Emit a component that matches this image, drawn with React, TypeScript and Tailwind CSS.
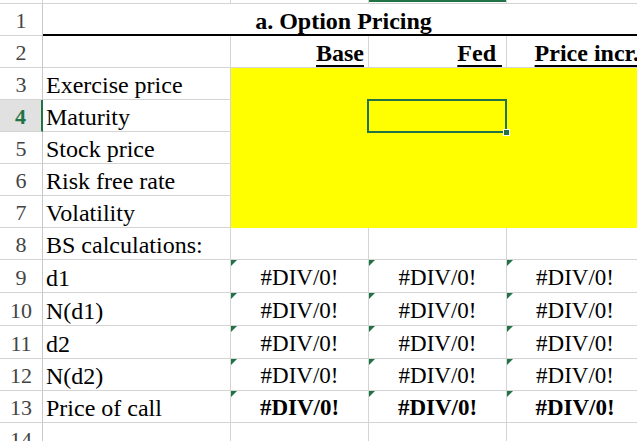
import React from "react";

const labels = [
  "",
  "",
  "Exercise price",
  "Maturity",
  "Stock price",
  "Risk free rate",
  "Volatility",
  "BS calculations:",
  "d1",
  "N(d1)",
  "d2",
  "N(d2)",
  "Price of call",
  "",
];

const heads = ["Base", "Fed ", "Price incr."];

function RowHead({ n }: { n: number }) {
  const sel = n === 4;
  return (
    <div
      className={`flex items-end justify-center border-b border-[#d4d4d4] pb-[1px] text-[22px] leading-[26px] ${
        sel ? "border-r-2 border-r-[#217346] bg-[#e1e1e1] font-bold text-[#217346]" : "border-r border-r-[#c8c8c8] text-[#444]"
      }`}
    >
      {n}
    </div>
  );
}

function ErrCell({ bold }: { bold: boolean }) {
  return (
    <div className="relative flex items-end justify-center border-b border-r border-[#d4d4d4] pb-[1px]">
      <span className="absolute left-0 top-0 h-0 w-0 border-r-[6px] border-t-[6px] border-r-transparent border-t-[#217346]" />
      <span className={bold ? "font-bold" : ""}>#DIV/0!</span>
    </div>
  );
}

export default function App() {
  const rows: React.ReactNode[] = [];

  for (let r = 1; r <= 14; r++) {
    rows.push(<RowHead key={`h${r}`} n={r} />);
    if (r === 1) {
      rows.push(
        <div key="title" className="col-span-4 flex items-end justify-center border-b-2 border-black text-[24px] font-bold">
          a. Option Pricing
        </div>
      );
      continue;
    }
    rows.push(
      <div key={`a${r}`} className="flex items-end border-b border-r border-[#d4d4d4] px-[3px] pb-[1px] text-[24px] whitespace-nowrap">
        {labels[r - 1]}
      </div>
    );
    for (let c = 0; c < 3; c++) {
      const k = `c${r}-${c}`;
      if (r === 2) {
        rows.push(
          <div key={k} className="flex items-end justify-end overflow-hidden border-b border-r border-[#d4d4d4] px-[4px] pb-[1px] text-[24px]">
            <span className="whitespace-pre font-bold underline decoration-2 underline-offset-[4px]">{heads[c]}</span>
          </div>
        );
      } else if (r >= 3 && r <= 7) {
        rows.push(<div key={k} className="bg-[#ffff00]" />);
      } else if (r >= 9 && r <= 13) {
        rows.push(<ErrCell key={k} bold={r === 13} />);
      } else {
        rows.push(<div key={k} className="border-b border-r border-[#d4d4d4]" />);
      }
    }
  }

  return (
    <div className="h-[441px] w-[637px] overflow-hidden bg-white font-['Liberation_Serif','Times_New_Roman',serif] text-[23px] leading-[26px] text-black">
      <div className="relative grid w-[644px] grid-cols-[43px_188px_138px_138px_137px] grid-rows-[4px_32px_32px_32px_32px_32px_32px_32px_32px_33px_33px_33px_32px_32px_32px]">
        {/* column header strip, cut off at top */}
        <div className="border-b border-r border-[#d4d4d4]" />
        <div className="border-b border-r border-[#d4d4d4]" />
        <div className="border-b border-r border-[#d4d4d4]" />
        <div className="border-b border-r border-[#d4d4d4]">
          <div className="h-[2px] bg-[#217346]" />
        </div>
        <div className="border-b border-[#d4d4d4]" />

        {rows}

        {/* active cell C4 */}
        <div className="pointer-events-none absolute left-[367px] top-[99px] h-[34px] w-[140px] border-2 border-[#217346]" />
        <div className="pointer-events-none absolute left-[503px] top-[129px] h-[7px] w-[7px] border border-white bg-[#217346]" />
      </div>
    </div>
  );
}
